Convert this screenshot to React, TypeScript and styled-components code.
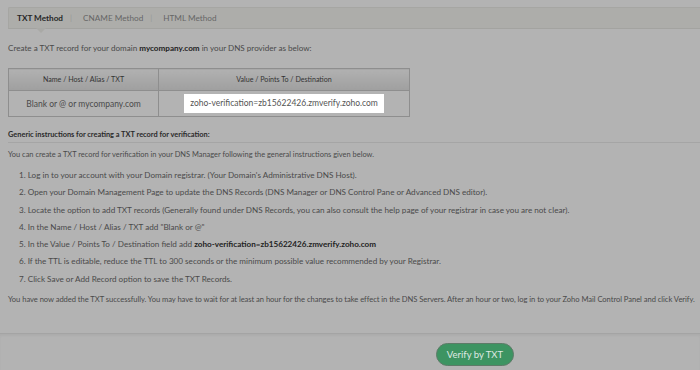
import React from "react";
import styled, { createGlobalStyle } from "styled-components";

const GlobalStyle = createGlobalStyle`
  html, body {
    margin: 0;
    padding: 0;
    background: #b3b3b3;
  }
  body {
    font-family: Lato, "Open Sans", "Liberation Sans", sans-serif;
    color: #454545;
  }
`;

const DOMAIN = "mycompany.com";
const TXT_VALUE = "zoho-verification=zb15622426.zmverify.zoho.com";

const steps: React.ReactNode[] = [
  "Log in to your account with your Domain registrar. (Your Domain's Administrative DNS Host).",
  "Open your Domain Management Page to update the DNS Records (DNS Manager or DNS Control Pane or Advanced DNS editor).",
  "Locate the option to add TXT records (Generally found under DNS Records, you can also consult the help page of your registrar in case you are not clear).",
  'In the Name / Host / Alias / TXT add "Blank or @"',
  <>
    In the Value / Points To / Destination field add <strong>{TXT_VALUE}</strong>
  </>,
  "If the TTL is editable, reduce the TTL to 300 seconds or the minimum possible value recommended by your Registrar.",
  "Click Save or Add Record option to save the TXT Records.",
];

const App: React.FC = () => {
  return (
    <>
      <GlobalStyle />
      <Page>
        <Content>
          <TabBar>
            <Tab $active>TXT Method</Tab>
            <Sep>|</Sep>
            <Tab>CNAME Method</Tab>
            <Sep>|</Sep>
            <Tab>HTML Method</Tab>
          </TabBar>

          <Intro>
            Create a TXT record for your domain <strong>{DOMAIN}</strong> in your DNS provider as below:
          </Intro>

          <RecordTable>
            <thead>
              <tr>
                <Th style={{ width: 149 }}>Name / Host / Alias / TXT</Th>
                <Th>Value / Points To / Destination</Th>
              </tr>
            </thead>
            <tbody>
              <tr>
                <Td>Blank or @ or {DOMAIN}</Td>
                <Td>
                  <ValueBox>{TXT_VALUE}</ValueBox>
                </Td>
              </tr>
            </tbody>
          </RecordTable>

          <SectionTitle>Generic instructions for creating a TXT record for verification:</SectionTitle>
          <Lead>You can create a TXT record for verification in your DNS Manager following the general instructions given below.</Lead>

          <Steps>
            {steps.map((s, i) => (
              <Step key={i}>
                {i + 1}. {s}
              </Step>
            ))}
          </Steps>

          <Note>
            You have now added the TXT successfully. You may have to wait for at least an hour for the changes to take
            effect in the DNS Servers. After an hour or two, log in to your Zoho Mail Control Panel and click Verify.
          </Note>
        </Content>

        <Footer>
          <VerifyButton>Verify by TXT</VerifyButton>
        </Footer>
      </Page>
    </>
  );
};

const Page = styled.div`
  width: 700px;
  height: 370px;
  display: flex;
  flex-direction: column;
  overflow: hidden;
`;

const Content = styled.div`
  flex: 1;
  min-height: 0;
  overflow: hidden;
  padding: 7px 0 0 8px;
`;

const TabBar = styled.div`
  position: relative;
  height: 20px;
  display: flex;
  align-items: center;
  padding-left: 8px;
  background: #adadaa;
  border-top: 1px solid #a6a6a3;
  border-bottom: 1px solid #a3a3a0;
  border-left: 1px solid #a6a6a3;
  border-top-left-radius: 2px;

  &::after {
    content: "";
    position: absolute;
    left: 27px;
    bottom: -5px;
    width: 0;
    height: 0;
    border-left: 5px solid transparent;
    border-right: 5px solid transparent;
    border-top: 5px solid #a9a9a6;
  }
`;

const Tab = styled.span<{ $active?: boolean }>`
  font-size: 8.2px;
  font-weight: ${(p) => (p.$active ? 700 : 400)};
  color: ${(p) => (p.$active ? "#262626" : "#666")};
`;

const Sep = styled.span`
  font-size: 8px;
  color: #999;
  margin: 0 11px 0 7px;
`;

const Intro = styled.p`
  margin: 14px 0 0;
  font-size: 8.1px;
  color: #4a4a4a;

  strong {
    color: #222;
    font-weight: 700;
  }
`;

const RecordTable = styled.table`
  margin-top: 15px;
  width: 402px;
  border-collapse: collapse;
  border: 1px solid #8e8e8e;
`;

const Th = styled.th`
  height: 21px;
  padding: 0;
  font-size: 7.1px;
  font-weight: 400;
  color: #333;
  background: linear-gradient(#b1b1b1, #9f9f9f);
  border: 1px solid #8e8e8e;
`;

const Td = styled.td`
  height: 25px;
  padding: 0;
  text-align: center;
  font-size: 8.5px;
  color: #4a4a4a;
  border: 1px solid #8e8e8e;
`;

const ValueBox = styled.span`
  display: inline-block;
  width: 200px;
  box-sizing: border-box;
  background: #fff;
  color: #555;
  padding: 4px 0;
  line-height: 11px;
  text-align: center;
`;

const SectionTitle = styled.div`
  margin-top: 13px;
  padding-bottom: 3px;
  font-size: 7.4px;
  font-weight: 700;
  color: #2a2a2a;
  border-bottom: 1px solid #a5a5a5;
`;

const Lead = styled.p`
  margin: 7px 0 0;
  font-size: 7.45px;
  color: #4a4a4a;
`;

const Steps = styled.ol`
  list-style: none;
  margin: 11px 0 0;
  padding: 0 0 0 11px;
  display: flex;
  flex-direction: column;
  gap: 7px;
`;

const Step = styled.li`
  font-size: 8.15px;
  line-height: 10.3px;
  color: #4a4a4a;

  strong {
    color: #222;
  }
`;

const Note = styled.p`
  margin: 10px 0 0;
  font-size: 7.6px;
  letter-spacing: -0.05px;
  color: #4a4a4a;
  white-space: nowrap;
`;

const Footer = styled.div`
  height: 37px;
  flex: none;
  display: flex;
  align-items: flex-start;
  justify-content: center;
  padding: 9px 0 0 250px;
  box-sizing: border-box;
  border-top: 1px solid #a4a4a4;
  box-shadow: inset 0 2px 2px rgba(0, 0, 0, 0.04);
`;

const VerifyButton = styled.button`
  width: 78px;
  height: 23px;
  border-radius: 12px;
  border: 1px solid #5d7b68;
  background: #3d9462;
  color: #dfe9e2;
  font-family: inherit;
  font-size: 9.5px;
  padding: 0;
  cursor: pointer;
`;

export default App;
